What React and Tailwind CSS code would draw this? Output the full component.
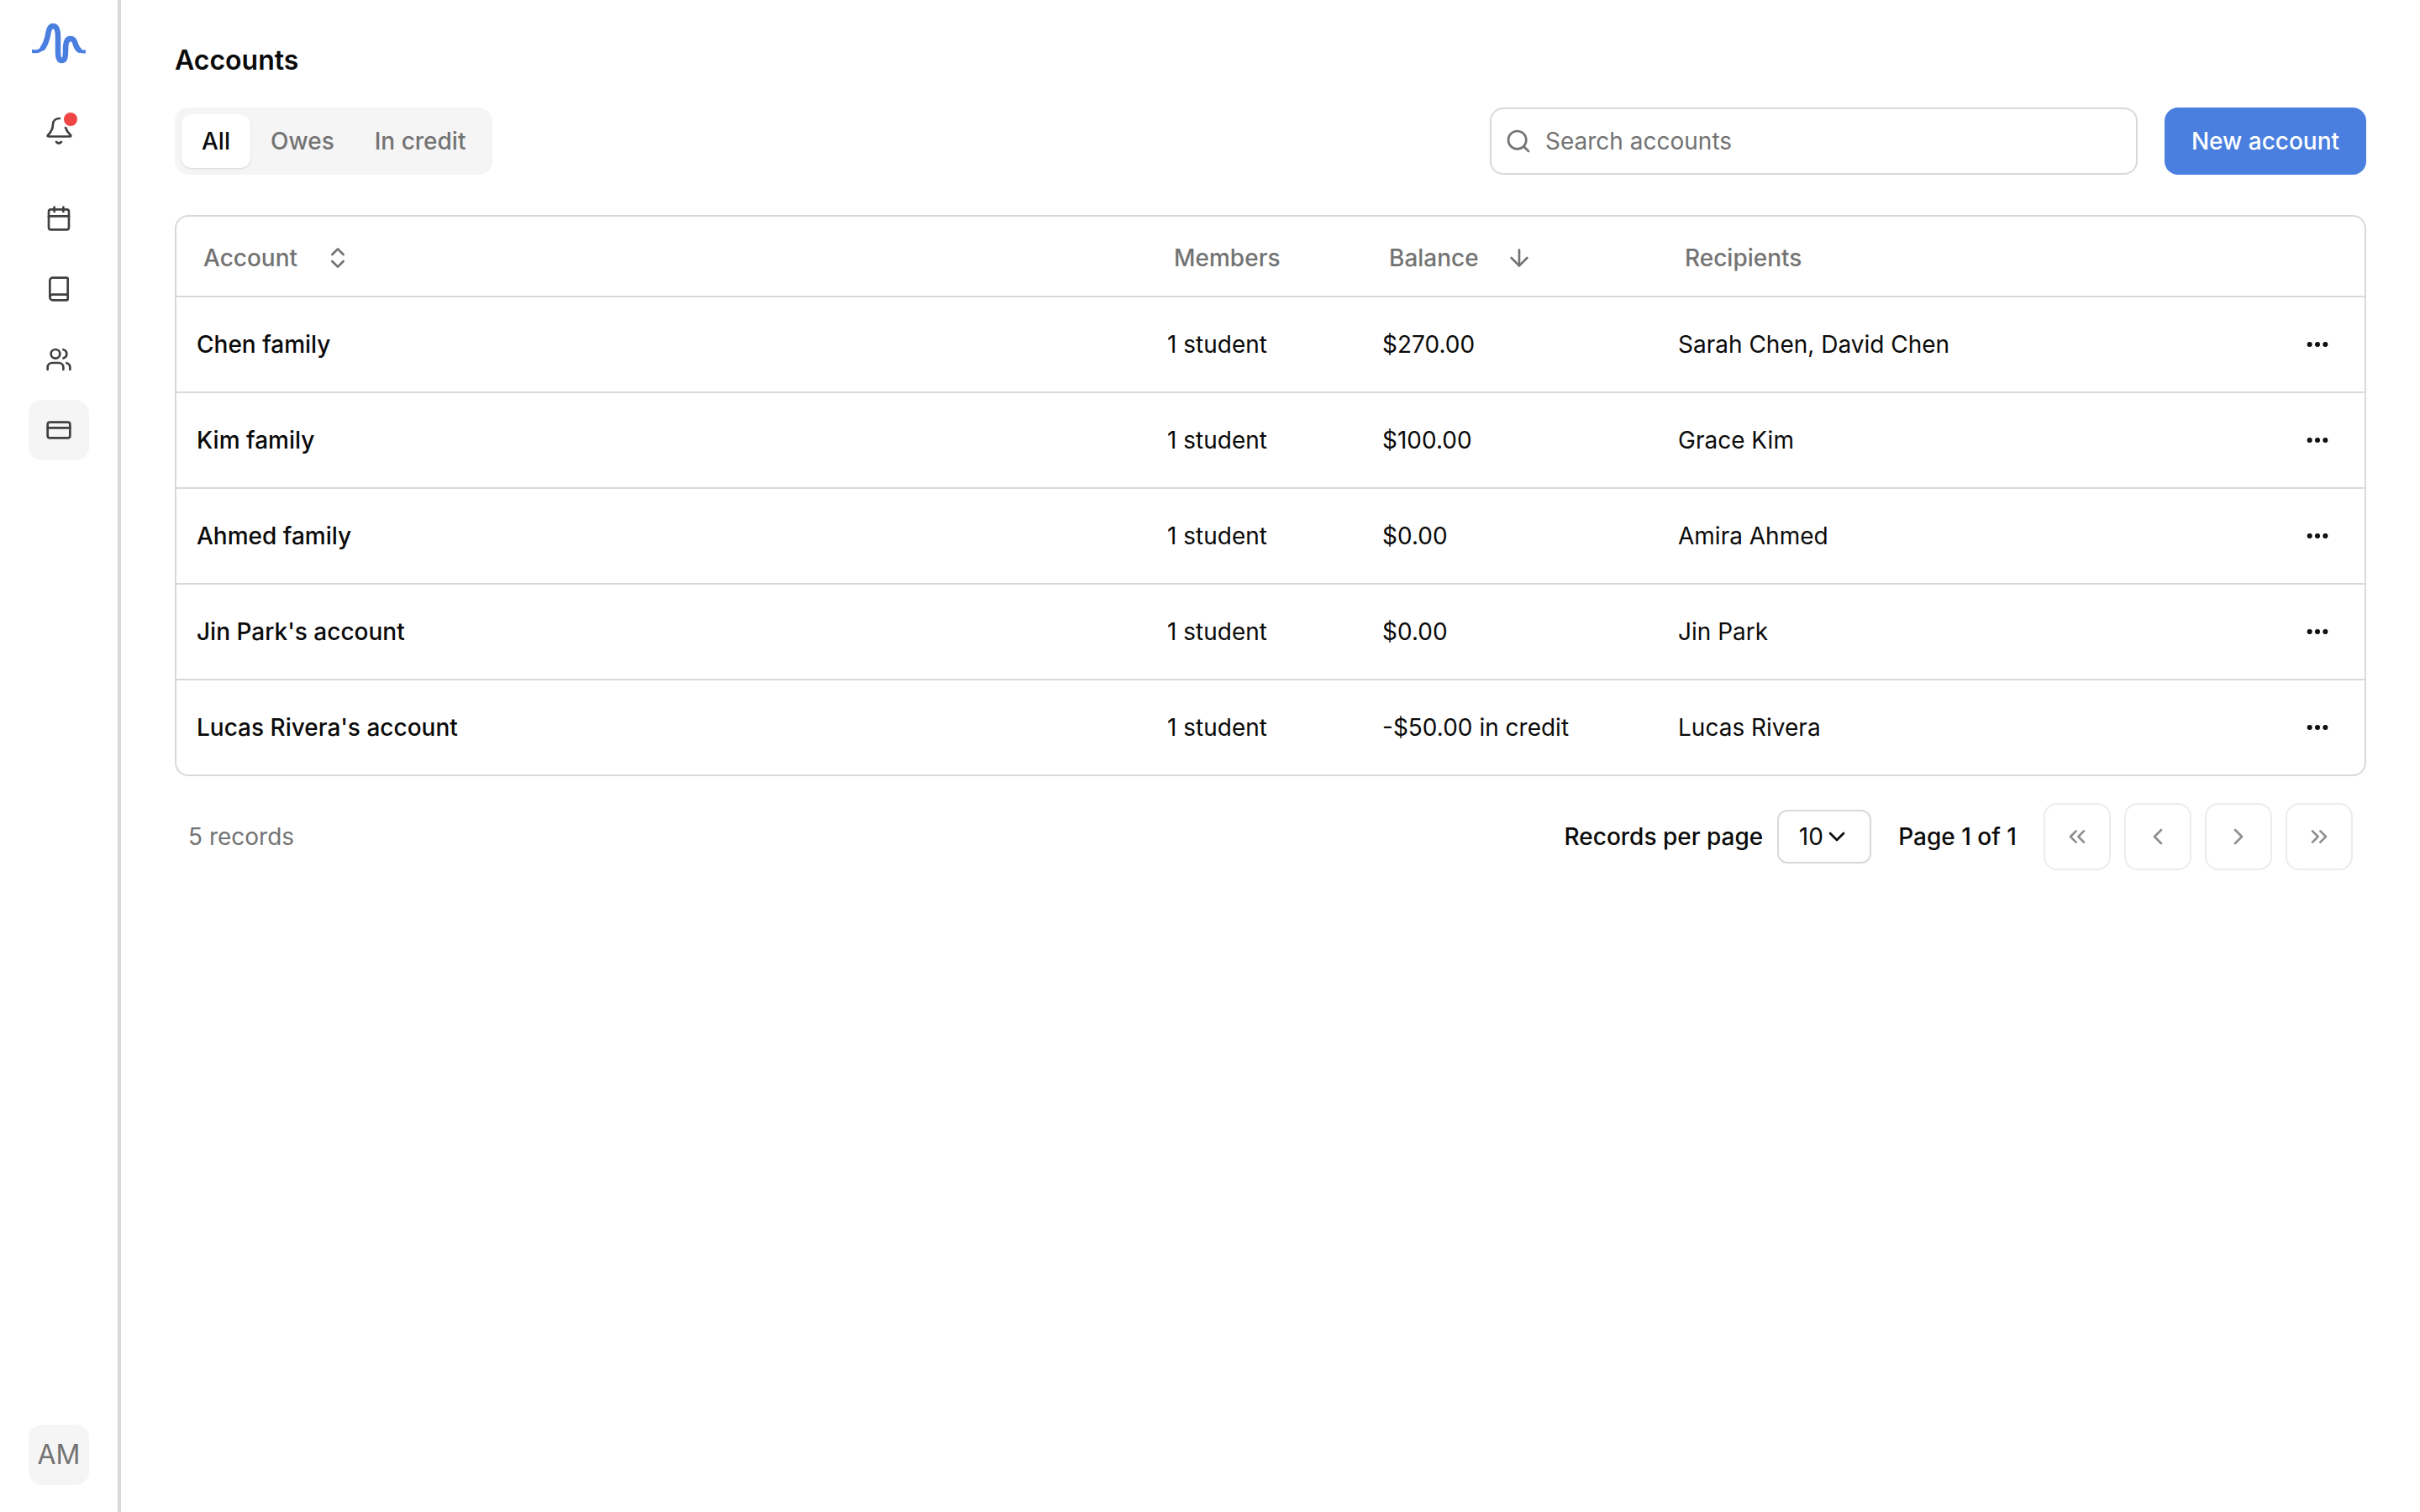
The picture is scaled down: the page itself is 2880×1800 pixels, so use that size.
import React from "react";
import {
  ArrowDown,
  Book,
  Calendar,
  ChevronDown,
  ChevronLeft,
  ChevronRight,
  ChevronsLeft,
  ChevronsRight,
  ChevronsUpDown,
  CreditCard,
  Ellipsis,
  Search,
  Users,
} from "lucide-react";

const accounts = [
  { name: "Chen family", members: "1 student", balance: "$270.00", recipients: "Sarah Chen, David Chen" },
  { name: "Kim family", members: "1 student", balance: "$100.00", recipients: "Grace Kim" },
  { name: "Ahmed family", members: "1 student", balance: "$0.00", recipients: "Amira Ahmed" },
  { name: "Jin Park's account", members: "1 student", balance: "$0.00", recipients: "Jin Park" },
  { name: "Lucas Rivera's account", members: "1 student", balance: "-$50.00 in credit", recipients: "Lucas Rivera" },
];

function Logo() {
  return (
    <svg width="64" height="50" viewBox="39 27 64 50" fill="none" className="text-[#4a7fe0]">
      <g stroke="currentColor" strokeLinecap="round">
        <path d="M40 61 C46 62 50 60 53 56" strokeWidth="4" />
        <path
          d="M52 57 C55 53 56.500 48 57.500 44 C59 35 60.500 31 64 31 C68.500 31 70 35 70 44 L70 62 C70 69 71.500 72 74.500 72 C78 72 79 69 79 60 C79 50 80.500 46 85 46 C88.500 46 90 49 91 53 C92 56 93 58 95 59.500"
          strokeWidth="6.500"
        />
        <path d="M94 59 C96.500 61 99 62 102 61.500" strokeWidth="4" />
      </g>
    </svg>
  );
}

function BellIcon() {
  return (
    <svg width="32" height="36" viewBox="54 138 32 36" fill="none" stroke="currentColor" strokeWidth="2.670" strokeLinecap="round" strokeLinejoin="round" className="text-[#404040]">
      <path d="M71 141 C66 141 63 144 63 148 C63 154 60 158 57 161 Q56 162.500 58 162.500 L83 162.500 Q85 162.500 84 161 C81 158 79 155 78 152" />
      <path d="M67 169 Q70 172 73 169" />
    </svg>
  );
}

function NavIcon({ icon: Icon, active }) {
  return (
    <div className={`flex h-[72px] w-[72px] items-center justify-center rounded-2xl ${active ? "bg-[#f5f5f5]" : ""}`}>
      <Icon size={32} strokeWidth={2} className="text-[#404040]" />
    </div>
  );
}

function PageButton({ icon: Icon }) {
  return (
    <button className="flex h-20 w-20 items-center justify-center rounded-2xl border-2 border-[#ececec] bg-white">
      <Icon size={32} strokeWidth={2} className="text-[#8f8f8f]" />
    </button>
  );
}

export default function App() {
  return (
    <div className="flex min-h-[1800px] bg-white font-['Inter',sans-serif] text-[28px] text-[#0a0a0a]">
      {/* Sidebar */}
      <aside className="flex w-[144px] shrink-0 flex-col items-center border-r-4 border-[#d9d9d9] pb-8 pt-[27px]">
        <Logo />
        <div className="relative mt-[43px] flex h-[72px] w-[72px] items-center justify-center">
          <BellIcon />
          <span className="absolute right-[14px] top-[14px] h-4 w-4 rounded-full bg-[#ef4444]" />
        </div>
        <div className="mt-8 flex flex-col gap-3">
          <NavIcon icon={Calendar} />
          <NavIcon icon={Book} />
          <NavIcon icon={Users} />
          <NavIcon icon={CreditCard} active />
        </div>
        <div className="mt-auto flex h-[72px] w-[72px] items-center justify-center rounded-2xl bg-[#f5f5f5] text-[32px] text-[#737373]">
          AM
        </div>
      </aside>

      {/* Main */}
      <main className="min-w-0 flex-1 px-16 pt-12">
        <h1 className="text-[32px] font-semibold leading-[48px]">Accounts</h1>

        <div className="mt-8 flex items-center justify-between">
          <div className="flex h-20 items-center rounded-2xl bg-[#f5f5f5] p-2">
            <div className="flex h-16 items-center rounded-xl bg-white px-6 font-medium shadow-sm">All</div>
            <div className="flex h-16 items-center px-6 font-medium text-[#737373]">Owes</div>
            <div className="flex h-16 items-center px-6 font-medium text-[#737373]">In credit</div>
          </div>
          <div className="flex items-center gap-8">
            <div className="flex h-20 w-[771px] items-center gap-4 rounded-2xl border-2 border-[#d9d9d9] px-4 text-[#737373]">
              <Search size={32} strokeWidth={2} />
              <span>Search accounts</span>
            </div>
            <button className="flex h-20 w-[240px] items-center justify-center rounded-2xl bg-[#4a7fe0] font-medium text-white">
              New account
            </button>
          </div>
        </div>

        {/* Table */}
        <div className="mt-12 rounded-2xl border-2 border-[#d9d9d9]">
          <div className="grid h-[94px] grid-cols-[1155px_256px_352px_1fr] items-center pl-6 pt-1 font-medium text-[#737373]">
            <div className="flex items-center gap-8 pl-2">
              Account <ChevronsUpDown size={32} strokeWidth={2} />
            </div>
            <div className="pl-2">Members</div>
            <div className="flex items-center gap-8 pl-2">
              Balance <ArrowDown size={32} strokeWidth={2} />
            </div>
            <div className="pl-2">Recipients</div>
          </div>
          {accounts.map((a) => (
            <div
              key={a.name}
              className="grid h-[114px] grid-cols-[1155px_256px_352px_1fr_auto] items-center border-t-2 border-[#d9d9d9] pl-6 pr-[40px]"
            >
              <div className="font-medium">{a.name}</div>
              <div>{a.members}</div>
              <div>{a.balance}</div>
              <div>{a.recipients}</div>
              <Ellipsis size={32} strokeWidth={2.500} />
            </div>
          ))}
        </div>

        {/* Pagination */}
        <div className="mt-8 flex items-center justify-between pl-4 pr-4">
          <div className="text-[#737373]">5 records</div>
          <div className="flex items-center font-medium">
            <span>Records per page</span>
            <div className="ml-[17px] flex h-16 w-[112px] items-center justify-center rounded-xl border-2 border-[#d9d9d9] font-normal">
              10 <ChevronDown size={32} strokeWidth={2} />
            </div>
            <span className="ml-8">Page 1 of 1</span>
            <div className="ml-8 flex gap-4">
              <PageButton icon={ChevronsLeft} />
              <PageButton icon={ChevronLeft} />
              <PageButton icon={ChevronRight} />
              <PageButton icon={ChevronsRight} />
            </div>
          </div>
        </div>
      </main>
    </div>
  );
}
